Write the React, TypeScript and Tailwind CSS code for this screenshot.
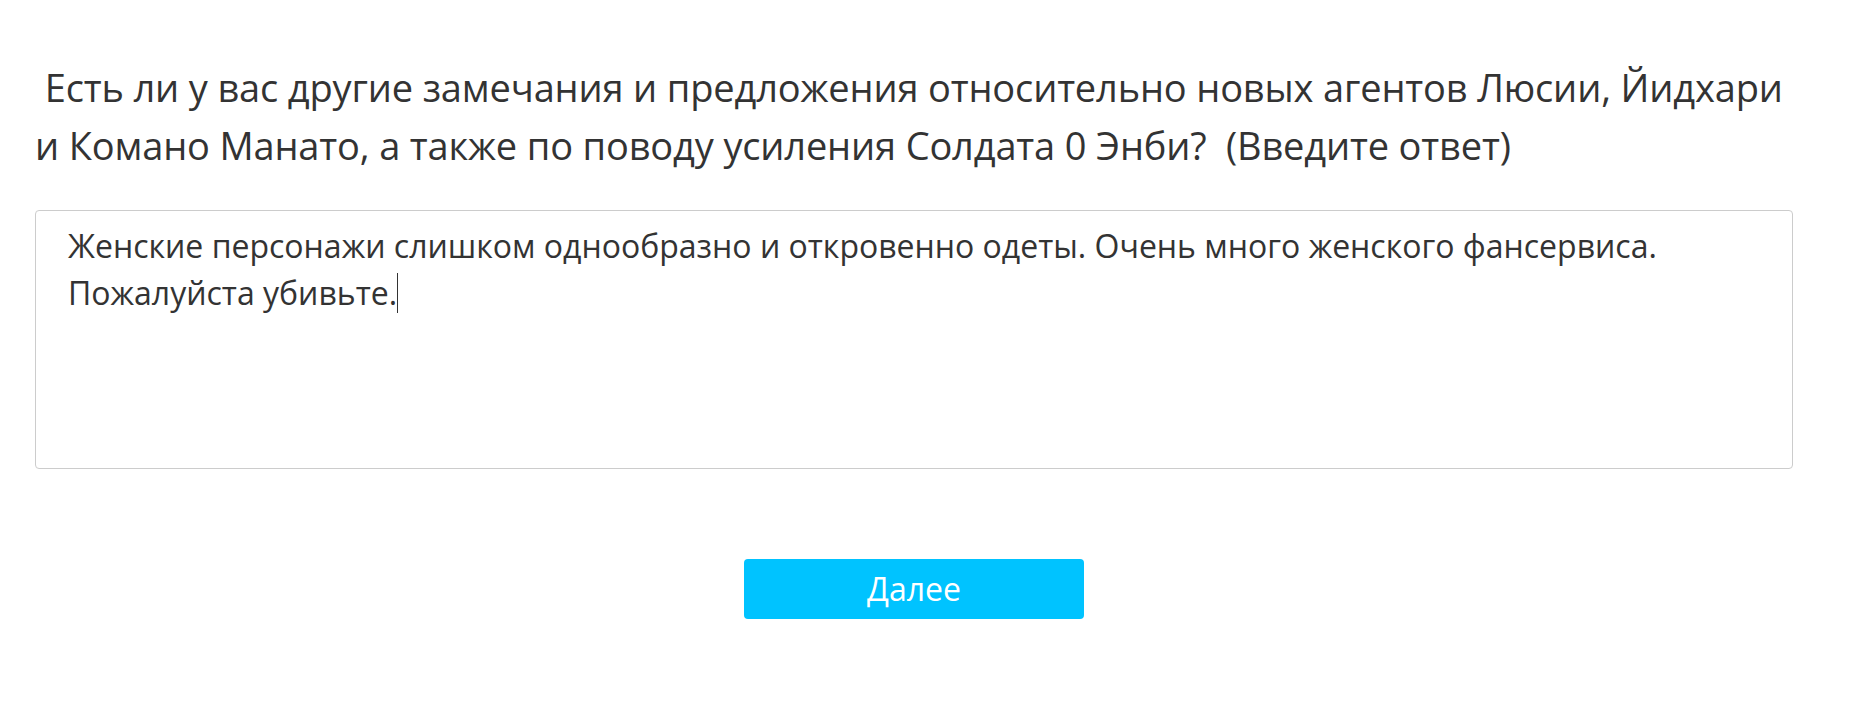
export default function App() {
  return (
    <div className="min-h-screen w-full bg-white font-['Open_Sans',sans-serif] text-[#333333]">
      <div className="ml-[35px] w-[1758px] pt-[58px]">
        <h1 className="text-[38px] leading-[58px] font-normal tracking-[-0.15px]">
          &nbsp;Есть ли у вас другие замечания и предложения относительно новых агентов Люсии, Йидхари и Комано
          Манато, а также по поводу усиления Солдата 0 Энби?&nbsp; (Введите ответ)
        </h1>
        <div className="mt-[36px] h-[259px] rounded-[4px] border border-[#cccccc] pl-[32px] pr-[24px] pt-[11px] text-[32px] leading-[47px]">
          Женские персонажи слишком однообразно и откровенно одеты. Очень много женского фансервиса.
          <br />
          Пожалуйста убивьте.<span className="inline-block w-px h-[40px] bg-[#333333] align-[-8px]" />
        </div>
        <div className="mt-[90px] flex justify-center">
          <button className="w-[340px] h-[60px] rounded-[4px] bg-[#00c3ff] text-white text-[32px] leading-none">
            Далее
          </button>
        </div>
      </div>
    </div>
  );
}
